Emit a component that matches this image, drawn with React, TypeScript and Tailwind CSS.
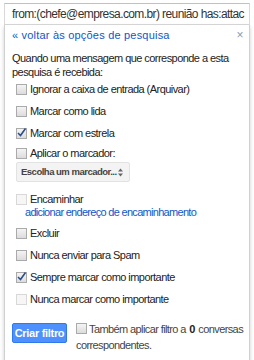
import React from 'react';

function Box({ checked = false, disabled = false }: { checked?: boolean; disabled?: boolean }) {
  return (
    <span
      className={`relative inline-block w-[11px] h-[11px] shrink-0 border ${
        disabled
          ? 'border-[#d8d8d8] bg-[#f6f6f6]'
          : 'border-[#aaaaaa] bg-gradient-to-b from-[#f4f4f4] to-[#dcdcdc]'
      }`}
    >
      {checked && (
        <svg className="absolute -left-[1px] -top-[2px] w-[11px] h-[11px]" viewBox="0 0 11 11">
          <path d="M2 6 L4.5 8.5 L9.5 1.5" fill="none" stroke="#2c4f8a" strokeWidth="1.6" />
        </svg>
      )}
    </span>
  );
}

function Row({ label, checked, disabled }: { label: string; checked?: boolean; disabled?: boolean }) {
  return (
    <div className="flex items-center gap-[3px] h-[22px] pl-1">
      <Box checked={checked} disabled={disabled} />
      <span>{label}</span>
    </div>
  );
}

export default function App() {
  return (
    <div className="w-[254px] h-[360px] bg-white px-1 pt-[3px] text-[#222] font-['Liberation_Sans',Arial,sans-serif]">
      {/* search box */}
      <div className="h-[22px] border border-[#d9d9d9] border-t-[#c0c0c0] flex items-center pl-[7px] overflow-hidden whitespace-nowrap text-[12px] tracking-[-0.6px] text-[#333]">
        from:(chefe@empresa.com.br) reunião has:attac
      </div>

      {/* filter panel */}
      <div className="border border-[#d0d0d0] border-t-0 shadow-[0_2px_4px_rgba(0,0,0,0.2)] pl-[7px] pr-[6px] pt-[3px] pb-[9px] text-[11px] tracking-[-0.55px]">
        <div className="flex items-center justify-between h-[14px]">
          <span className="text-[11px] tracking-[0.2px] text-[#15c]">« voltar às opções de pesquisa</span>
          <span className="text-[12px] text-[#999]">×</span>
        </div>

        <p className="mt-[9px] leading-[14px]">
          Quando uma mensagem que corresponde a esta pesquisa é recebida:
        </p>

        <div className="mt-[-1px]">
          <Row label="Ignorar a caixa de entrada (Arquivar)" />
          <Row label="Marcar como lida" />
          <Row label="Marcar com estrela" checked />
          <div className="flex items-center gap-[3px] h-[18px] pl-1">
            <Box />
            <span>Aplicar o marcador:</span>
          </div>
          <div className="ml-1 w-[114px] h-[20px] bg-[#f3f3f3] border border-[#e2e2e2] rounded-[2px] flex items-center justify-between pl-[4px] pr-[6px] text-[9.5px] tracking-[-0.5px] font-bold text-[#444] whitespace-nowrap">
            <span>Escolha um marcador...</span>
            <svg className="w-[5px] h-[9px]" viewBox="0 0 5 9">
              <path d="M0 3.5 L2.5 0.5 L5 3.5 Z M0 5.5 L2.5 8.5 L5 5.5 Z" fill="#666" />
            </svg>
          </div>
          <div className="mt-[10px] flex items-center gap-[3px] h-[14px] pl-1">
            <Box disabled />
            <span>Encaminhar</span>
          </div>
          <div className="pl-[13px] h-[12px] leading-[12px] text-[11px] tracking-[-0.7px] text-[#15c]">
            adicionar endereço de encaminhamento
          </div>
          <div className="mt-[4px]">
            <Row label="Excluir" />
            <Row label="Nunca enviar para Spam" />
            <Row label="Sempre marcar como importante" checked />
            <Row label="Nunca marcar como importante" disabled />
          </div>
        </div>

        <div className="mt-[12px] flex items-start gap-[9px]">
          <button className="shrink-0 w-[55px] h-[20px] mt-[1px] whitespace-nowrap bg-[#4d90fe] border border-[#3079ed] rounded-[2px] text-white text-[11px] tracking-[-0.3px] font-bold">
            Criar filtro
          </button>
          <p className="text-[11px] leading-[15px] tracking-[-0.6px] text-[#444] whitespace-nowrap">
            <span className="inline-block align-[-1px] mr-[2px]"><Box /></span>
            <span>Também aplicar filtro a </span>
            <b className="text-[#222] mx-[1px]">0</b>
            <span> conversas</span>
            <br />
            <span>correspondentes.</span>
          </p>
        </div>
      </div>
    </div>
  );
}
